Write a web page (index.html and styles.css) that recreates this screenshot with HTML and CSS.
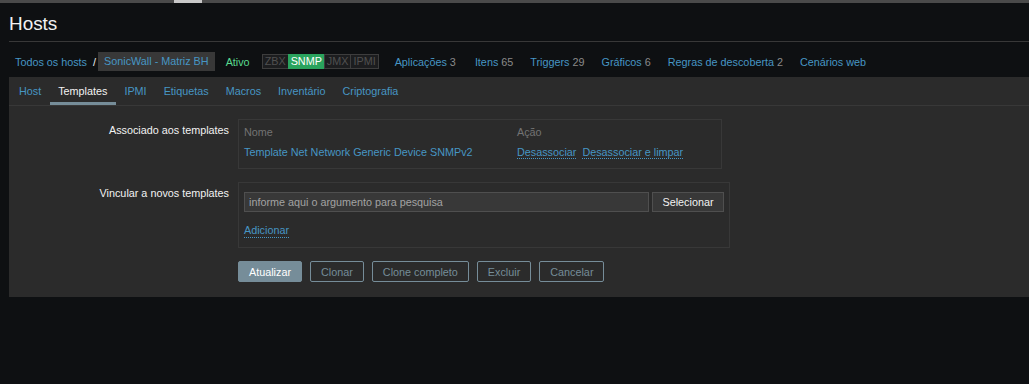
FILE: index.html
```html
<!DOCTYPE html>
<html lang="pt-BR">
<head>
  <meta charset="UTF-8">
  <meta name="viewport" content="width=device-width, initial-scale=1.0">
  <title>Hosts</title>
  <link rel="stylesheet" href="styles.css">
</head>
<body>
  <div class="scroll-track"><div class="scroll-thumb"></div></div>

  <div class="wrapper">
    <header class="page-header">
      <h1>Hosts</h1>
    </header>

    <nav class="host-nav">
      <a class="link" href="#">Todos os hosts</a>
      <span class="sep">/</span>
      <span class="crumb-current">SonicWall - Matriz BH</span>
      <span class="status-on">Ativo</span>
      <span class="avail">
        <span>ZBX</span><span class="on">SNMP</span><span>JMX</span><span>IPMI</span>
      </span>
      <span class="nav-item nav-first"><a class="link" href="#">Aplicações</a> <span class="count">3</span></span>
      <span class="nav-item"><a class="link" href="#">Itens</a> <span class="count">65</span></span>
      <span class="nav-item"><a class="link" href="#">Triggers</a> <span class="count">29</span></span>
      <span class="nav-item"><a class="link" href="#">Gráficos</a> <span class="count">6</span></span>
      <span class="nav-item"><a class="link" href="#">Regras de descoberta</a> <span class="count">2</span></span>
      <span class="nav-item"><a class="link" href="#">Cenários web</a></span>
    </nav>

    <div class="panel">
      <ul class="tabs">
        <li><a href="#">Host</a></li>
        <li class="active"><a href="#">Templates</a></li>
        <li><a href="#">IPMI</a></li>
        <li><a href="#">Etiquetas</a></li>
        <li><a href="#">Macros</a></li>
        <li><a href="#">Inventário</a></li>
        <li><a href="#">Criptografia</a></li>
      </ul>

      <form class="form-grid">
        <label class="form-label">Associado aos templates</label>
        <div class="box box-linked">
          <table>
            <tr>
              <th class="col-name">Nome</th>
              <th>Ação</th>
            </tr>
            <tr>
              <td><a class="link" href="#">Template Net Network Generic Device SNMPv2</a></td>
              <td><a class="dotted" href="#">Desassociar</a> <a class="dotted" href="#">Desassociar e limpar</a></td>
            </tr>
          </table>
        </div>

        <label class="form-label">Vincular a novos templates</label>
        <div class="box box-new">
          <div class="ms-row">
            <input type="text" class="ms-input" placeholder="informe aqui o argumento para pesquisa">
            <button type="button" class="btn-grey">Selecionar</button>
          </div>
          <a class="dotted add-link" href="#">Adicionar</a>
        </div>

        <div class="actions">
          <button type="button" class="btn-main">Atualizar</button>
          <button type="button" class="btn-alt">Clonar</button>
          <button type="button" class="btn-alt">Clone completo</button>
          <button type="button" class="btn-alt">Excluir</button>
          <button type="button" class="btn-alt">Cancelar</button>
        </div>
      </form>
    </div>
  </div>
</body>
</html>
```

FILE: styles.css
```css
body {
  margin: 0;
  background-color: #0e1012;
  color: #f2f2f2;
  font-family: "Liberation Sans", Arial, sans-serif;
  font-size: 10.8px;
  line-height: 14px;
  overflow: hidden;
}

a {
  text-decoration: none;
}

.link {
  color: #4796c4;
}

/* barra de rolagem no topo */
.scroll-track {
  height: 3px;
  background-color: #4a4a4a;
  display: flex;
}

.scroll-thumb {
  width: 28px;
  margin-left: 174px;
  background-color: #c8c8c8;
}

.wrapper {
  padding-left: 9px;
}

.page-header {
  margin-top: 9px;
  padding-bottom: 5px;
  border-bottom: 1px solid #383838;
}

.page-header h1 {
  margin: 0;
  font-size: 18.9px;
  line-height: 24px;
  font-weight: normal;
  color: #f2f2f2;
}

/* navegação do host */
.host-nav {
  display: flex;
  align-items: center;
  height: 19px;
  padding: 10px 0 6px 6px;
  white-space: nowrap;
}

.sep {
  margin: 0 2px 0 6px;
  color: #f2f2f2;
}

.crumb-current {
  background-color: #383838;
  color: #4796c4;
  height: 19px;
  line-height: 19px;
  padding: 0 6px;
}

.status-on {
  color: #59db8f;
  margin-left: 11px;
}

.avail {
  display: flex;
  margin-left: 12px;
  margin-right: 16px;
  height: 15px;
  line-height: 13px;
}

.avail span {
  border: 1px solid #3d3d3d;
  background-color: #1c1d1f;
  color: #505050;
  padding: 0 2px;
  margin-left: -1px;
}

.avail span:first-child {
  margin-left: 0;
}

.avail span.on {
  background-color: #2aa35d;
  border-color: #2aa35d;
  color: #ffffff;
}

.nav-item {
  margin-right: 17px;
}

.nav-item.nav-first {
  margin-right: 19px;
}

.count {
  color: #8a8a8a;
}

/* painel com abas */
.panel {
  background-color: #2b2b2b;
  padding-bottom: 15px;
}

.tabs {
  display: flex;
  list-style: none;
  margin: 0;
  padding: 0 0 0 1.5px;
  border-bottom: 1px solid #383838;
}

.tabs li a {
  display: block;
  height: 28px;
  line-height: 28px;
  padding: 0 8.5px;
  color: #4796c4;
}

.tabs li.active a {
  color: #f2f2f2;
  box-shadow: inset 0 -3px 0 #768d99;
}

.form-grid {
  display: grid;
  grid-template-columns: 220px auto;
  column-gap: 9px;
  row-gap: 13px;
  padding-top: 13px;
  justify-items: start;
}

.form-label {
  justify-self: end;
  padding-top: 4px;
}

.box {
  border: 1px solid #383838;
  box-sizing: border-box;
}

.box-linked {
  width: 484px;
  padding: 2px 5px 6px;
}

.box-linked table {
  border-collapse: collapse;
}

.box-linked th,
.box-linked td {
  padding: 3px 0;
  text-align: left;
  white-space: nowrap;
}

.box-linked th {
  font-weight: normal;
  color: #737373;
}

.col-name {
  width: 273px;
}

.dotted {
  color: #4796c4;
  border-bottom: 1px dotted #4796c4;
}

.dotted + .dotted {
  margin-left: 3px;
}

.box-new {
  width: 492px;
  padding: 9px 4px 9px 5px;
}

.ms-row {
  display: flex;
  gap: 3px;
  margin-bottom: 11px;
}

.ms-input {
  width: 405px;
  height: 20px;
  box-sizing: border-box;
  margin: 0;
  padding: 0 4px;
  background-color: #383838;
  border: 1px solid #4f4f4f;
  color: #f2f2f2;
  font-family: inherit;
  font-size: 10.8px;
}

.ms-input::placeholder {
  color: #a3a3a3;
  opacity: 1;
}

.add-link {
  display: inline-block;
  line-height: 13px;
}

button {
  font-family: inherit;
  font-size: 10.8px;
  margin: 0;
  cursor: pointer;
}

.btn-grey {
  width: 72px;
  height: 20px;
  padding: 0;
  background-color: #383838;
  border: 1px solid #4f4f4f;
  color: #f2f2f2;
}

.actions {
  grid-column: 2;
  display: flex;
  gap: 8px;
}

.actions button {
  height: 21px;
  padding: 0 10px;
  border-radius: 2px;
}

.btn-main {
  background-color: #768d99;
  border: 1px solid #768d99;
  color: #ffffff;
}

.btn-alt {
  background-color: transparent;
  border: 1px solid #768d99;
  color: #768d99;
}
```
